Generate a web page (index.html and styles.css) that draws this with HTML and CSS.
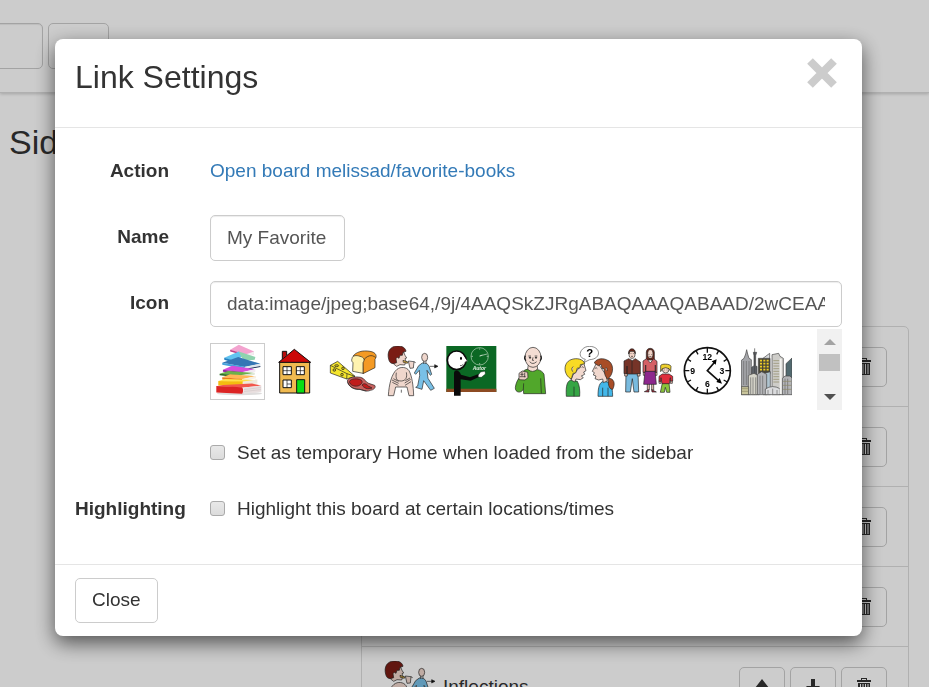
FILE: index.html
```html
<!DOCTYPE html>
<html lang="en">
<head>
    <meta charset="UTF-8">
    <meta name="viewport" content="width=device-width, initial-scale=1.0">
    <title>Link Settings</title>
    <link rel="stylesheet" href="styles.css">
</head>
<body>
    <!-- shared icons -->
    <svg class="symbols" aria-hidden="true">
        <symbol id="icon-up" viewBox="0 0 16 17">
            <path d="M8 1 L15 10 H10 V16 H6 V10 H1 Z"/>
        </symbol>
        <symbol id="icon-down" viewBox="0 0 16 17">
            <path d="M8 16 L1 8 H6 V1 H10 V8 H15 Z"/>
        </symbol>
        <symbol id="icon-trash" viewBox="0 0 16 17">
            <path d="M5 2 V0 H11 V2 H15 V4 H1 V2 Z M6 2 H10 V1 H6 Z" fill-rule="evenodd"/>
            <path d="M2 5 H14 V17 H2 Z M4 6 V16 H5 V6 Z M6.500 6 V16 H7.500 V6 Z M9 6 V16 H10 V6 Z M11.500 6 V16 H12.500 V6 Z" fill-rule="evenodd"/>
        </symbol>
        <symbol id="pic-inflections" viewBox="183 60 153 153">
            <g stroke="#222" stroke-width="2" stroke-linejoin="round">
                <path d="M207 96 L231 74 L237 88 L242 96 L237 98 L240 106 L236 117 L222 116 L212 121 L203 114 Z" fill="#efd6cc"/>
                <path d="M188 100 C182 78 192 61 213 60 C230 59 239 67 240 76 L231 79 L229 88 L222 88 L219 97 L214 94 L210 98 L212 110 L202 113 C194 113 190 108 188 100 Z" fill="#7a1c14"/>
                <path d="M231 103 L246 108 L244 112 L232 109 Z" fill="#e2b33c"/>
                <path d="M247 105 L264 107 L269 110 M247 105 L252 127 L262 126 L264 107" fill="#efd6cc"/>
                <path d="M213 130 C224 121 242 123 249 134 C258 150 262 180 263 209 H249 L243 183 L209 183 L203 209 H187 C189 175 197 143 213 130 Z" fill="#efd6cc"/>
                <path d="M211 140 C208 160 213 165 226 165 C240 164 244 154 241 139 M198 162 L218 172 M199 169 L217 178 M202 158 L218 166 M254 160 L236 171 M255 167 L237 178 M252 156 L238 164 M226 191 V200" fill="none"/>
                <path d="M289 111 C299 110 305 113 309 120 L317 145 L313 148 L303 133 L306 157 L325 187 L314 193 L293 164 L288 190 L269 184 L275 180 L281 149 L280 133 L269 145 L265 141 L278 119 Z" fill="#79c0e6"/>
                <ellipse cx="296" cy="94" rx="9" ry="12" fill="#efd6cc"/>
                <path d="M293 105 V113 M300 105 V113 M312 121 H328" fill="none"/>
                <path d="M326 116 L336 121 L326 126 Z" fill="#111"/>
            </g>
        </symbol>
    </svg>

    <!-- page behind the dialog -->
    <div class="page">
        <div class="topbar">
            <input type="text" class="search-box" aria-label="Search">
            <button type="button" class="search-btn" aria-label="Find"></button>
        </div>
        <h2 class="page-title">Sidebar</h2>
        <ul class="board-list">
            <li>
                <div class="actions">
                    <button type="button" aria-label="Move up"><svg><use href="#icon-up"/></svg></button>
                    <button type="button" aria-label="Move down"><svg><use href="#icon-down"/></svg></button>
                    <button type="button" aria-label="Delete"><svg><use href="#icon-trash"/></svg></button>
                </div>
            </li>
            <li>
                <div class="actions">
                    <button type="button" aria-label="Move up"><svg><use href="#icon-up"/></svg></button>
                    <button type="button" aria-label="Move down"><svg><use href="#icon-down"/></svg></button>
                    <button type="button" aria-label="Delete"><svg><use href="#icon-trash"/></svg></button>
                </div>
            </li>
            <li>
                <div class="actions">
                    <button type="button" aria-label="Move up"><svg><use href="#icon-up"/></svg></button>
                    <button type="button" aria-label="Move down"><svg><use href="#icon-down"/></svg></button>
                    <button type="button" aria-label="Delete"><svg><use href="#icon-trash"/></svg></button>
                </div>
            </li>
            <li>
                <div class="actions">
                    <button type="button" aria-label="Move up"><svg><use href="#icon-up"/></svg></button>
                    <button type="button" aria-label="Move down"><svg><use href="#icon-down"/></svg></button>
                    <button type="button" aria-label="Delete"><svg><use href="#icon-trash"/></svg></button>
                </div>
            </li>
            <li>
                <svg class="board-pic"><use href="#pic-inflections"/></svg>
                <span>Inflections</span>
                <div class="actions">
                    <button type="button" aria-label="Move up"><svg><use href="#icon-up"/></svg></button>
                    <button type="button" aria-label="Move down"><svg><use href="#icon-down"/></svg></button>
                    <button type="button" aria-label="Delete"><svg><use href="#icon-trash"/></svg></button>
                </div>
            </li>
        </ul>
    </div>

    <div class="overlay">
        <form class="modal" role="dialog" aria-labelledby="modal-title">
            <div class="modal-header">
                <h1 id="modal-title">Link Settings</h1>
                <button type="button" class="close-x" aria-label="Close">
                    <svg viewBox="0 0 31 31"><path d="M3 2 L27 26 M27 2 L3 26"/></svg>
                </button>
            </div>

            <div class="modal-body">
                <div class="form-row tall">
                    <span class="label">Action</span>
                    <div class="text-line"><a href="#">Open board melissad/favorite-books</a></div>
                </div>
                <div class="form-row tall">
                    <label class="label" for="name">Name</label>
                    <div><input type="text" id="name" class="text-box short" value="My Favorite"></div>
                </div>
                <div class="form-row tall">
                    <label class="label" for="icon">Icon</label>
                    <div>
                        <input type="text" id="icon" class="text-box" value="data:image/jpeg;base64,/9j/4AAQSkZJRgABAQAAAQABAAD/2wCEAAkGBxMTEhUT">
                        <div class="picker">
                            <div class="pictures">
                                <button type="button" class="picture selected" aria-label="Books">
                                    <svg viewBox="8 11 160 165">
                                        <ellipse cx="94" cy="160" rx="68" ry="5" fill="#dedcdc"/>
                                        <!-- pink -->
                                        <path d="M66 28 L92 13 L138 33 L136 44 L112 45 Z" fill="#f3a3cf"/>
                                        <path d="M66 28 L112 42 L112 46 L66 33 Z" fill="#c23f86"/>
                                        <path d="M112 42 L138 33 L137 43 L112 48 Z" fill="#f4eef1"/>
                                        <!-- light blue -->
                                        <path d="M48 52 L92 33 L106 48 L78 64 Z" fill="#62c3f0"/>
                                        <path d="M92 33 L142 50 L140 58 L104 62 Z" fill="#8fd3ae"/>
                                        <path d="M48 52 L78 61 L78 68 L48 58 Z" fill="#2383c4"/>
                                        <path d="M78 61 L100 50 L106 58 L80 69 Z" fill="#f5f6f7"/>
                                        <!-- blue -->
                                        <path d="M42 67 L90 50 L157 70 L110 80 Z" fill="#3576b5"/>
                                        <path d="M42 67 L110 79 V86 L42 73 Z" fill="#45a2dc"/>
                                        <path d="M110 79 L157 70 V77 L110 86 Z" fill="#dfe6ee"/>
                                        <path d="M110 86 L157 77 V80 L110 89 Z" fill="#23375f"/>
                                        <!-- purple -->
                                        <path d="M44 88 L72 76 L142 87 L104 96 Z" fill="#d64ddb"/>
                                        <path d="M44 88 L104 95 V102 L44 94 Z" fill="#9a1fa5"/>
                                        <path d="M104 95 L142 86 V94 L104 102 Z" fill="#f2eaf3"/>
                                        <!-- green -->
                                        <path d="M34 100 L60 92 L140 98 L96 106 Z" fill="#6bb04c"/>
                                        <path d="M34 100 L96 105 V112 L34 105 Z" fill="#2c6d25"/>
                                        <path d="M96 105 L140 97 V103 L96 112 Z" fill="#dfe9d8"/>
                                        <!-- orange -->
                                        <path d="M42 111 L66 102 L144 108 L102 117 Z" fill="#ffb657"/>
                                        <path d="M42 111 L102 116 V123 L42 118 Z" fill="#ea7d1a"/>
                                        <path d="M102 116 L144 107 V114 L102 123 Z" fill="#f7f0e4"/>
                                        <!-- yellow -->
                                        <path d="M30 122 L52 116 L148 119 L104 126 Z" fill="#ffe14a"/>
                                        <path d="M30 122 L104 124 V136 H30 Z" fill="#f4bd10"/>
                                        <path d="M104 124 L148 118 V130 L104 136 Z" fill="#efe9dc"/>
                                        <!-- red -->
                                        <path d="M24 138 L44 134 L132 130 L160 136 L106 142 Z" fill="#f2574b"/>
                                        <path d="M24 137 L102 141 Q108 150 102 161 L24 157 Z" fill="#dc2424"/>
                                        <path d="M106 142 L160 136 V155 L106 161 Z" fill="#e9dfdf"/>
                                        <path d="M107 148 L159 142 M107 154 L159 148" stroke="#bdb3b3" fill="none"/>
                                    </svg>
                                </button>
                                <button type="button" class="picture" aria-label="House">
                                    <svg viewBox="188 60 153 153">
                                        <g stroke="#111" stroke-width="3">
                                            <path d="M228 100 V76 H241 V88" fill="#b60c0c"/>
                                            <path d="M220 108 H310 V201 H220 Z" fill="#f0ba50"/>
                                            <path d="M217 109 L264 70 L313 109 Z" fill="#cc0808"/>
                                            <path d="M230 122 H255 V146 H230 Z M270 122 H294 V146 H270 Z M230 162 H255 V185 H230 Z" fill="#fff"/>
                                            <path d="M242 122 V146 M230 134 H255 M282 122 V146 M270 134 H294 M242 162 V185 M242 174 H255" stroke-width="2"/>
                                            <path d="M271 161 H295 V201 H271 Z" fill="#08df14"/>
                                        </g>
                                    </svg>
                                </button>
                                <button type="button" class="picture" aria-label="Food">
                                    <svg viewBox="8 60 153 153">
                                        <g stroke="#222" stroke-width="2" stroke-linejoin="round">
                                            <path d="M15 118 L37 106 L89 151 L64 159 L15 141 Z" fill="#f5e52d"/>
                                            <path d="M15 118 L65 143 L89 151 M65 143 L64 159" fill="none"/>
                                            <ellipse cx="34" cy="119" rx="6" ry="3" fill="#c8b51b"/>
                                            <circle cx="27" cy="132" r="4" fill="#c8b51b"/>
                                            <circle cx="50" cy="146" r="4" fill="#c8b51b"/>
                                            <circle cx="53" cy="127" r="4" fill="#c8b51b"/>
                                            <path d="M83 91 C91 78 112 72 134 76 C153 79 156 91 149 100 V125 L113 143 L112 106 C107 92 94 94 83 91 Z" fill="#f49a24"/>
                                            <path d="M112 106 C124 88 140 84 151 95" fill="none"/>
                                            <path d="M80 98 C81 88 93 87 104 91 C117 94 119 102 113 110 V142 L82 136 L83 110 C79 107 78 102 80 98 Z" fill="#fff3b0"/>
                                            <path d="M66 165 C69 153 88 151 106 154 C119 157 119 168 130 172 L148 178 C153 184 145 192 135 193 C122 199 112 191 101 190 C82 190 68 180 66 165 Z" fill="#c9625f"/>
                                            <path d="M72 167 C77 156 97 157 107 162 C116 168 106 177 98 180 C85 182 74 177 72 167 Z M110 177 C117 169 124 175 129 180 L140 186 C127 191 116 187 110 177 Z" fill="#c01c1c"/>
                                            <path d="M67 169 C74 187 93 191 103 190 L123 195" fill="none"/>
                                        </g>
                                    </svg>
                                </button>
                                <button type="button" class="picture" aria-label="Inflections">
                                    <svg><use href="#pic-inflections"/></svg>
                                </button>
                                <button type="button" class="picture" aria-label="School">
                                    <svg viewBox="362 60 153 153">
                                        <path d="M363 60 H513 V198 H363 Z" fill="#0b6824"/>
                                        <path d="M363 188 H513 V198 H363 Z" fill="#8d4b23"/>
                                        <circle cx="463" cy="91" r="26" fill="none" stroke="#b9d6bd" stroke-width="2"/>
                                        <path d="M463 90 L485 84 M463 90 L471 87 M463 67 V71 M463 111 V116 M438 91 H443 M484 91 H489" stroke="#d6e7d7" stroke-width="2"/>
                                        <text class="chalk" x="442" y="133">Autor</text>
                                        <path d="M386 209 V140 C388 130 402 132 407 146 L434 154 L462 143 L466 151 L436 164 L406 160 V209 Z" fill="#0a0a0a"/>
                                        <path d="M459 147 L466 138 L479 136 L480 144 L468 154 L459 153 Z" fill="#fff" stroke="#111"/>
                                        <circle cx="394" cy="103" r="28" fill="#fff" stroke="#0a0a0a" stroke-width="5"/>
                                        <path d="M415 91 L427 105 L416 111 Z" fill="#fff"/>
                                        <path d="M417 89 L426 105 L418 109" fill="none" stroke="#111" stroke-width="2"/>
                                        <ellipse cx="407" cy="97" rx="3" ry="5"/>
                                        <path d="M404 119 Q409 120 414 115" fill="none" stroke="#111" stroke-width="2"/>
                                    </svg>
                                </button>
                                <button type="button" class="picture" aria-label="Me">
                                    <svg viewBox="14 60 153 153">
                                        <g stroke="#222" stroke-width="2" stroke-linejoin="round">
                                            <path d="M80 130 C102 127 125 130 131 145 L136 203 H70 L69 190 C62 203 44 200 45 185 C46 171 54 156 62 150 C65 138 70 132 80 130 Z" fill="#51a72b"/>
                                            <path d="M121 157 L123 202 M70 172 L69 190" fill="none"/>
                                            <path d="M84 116 L82 130 Q97 143 112 129 L110 116" fill="#f4ddd3"/>
                                            <ellipse cx="98" cy="94" rx="24" ry="30" fill="#f4ddd3"/>
                                            <path d="M75 89 Q70 98 77 104 M121 89 Q126 98 119 104" fill="none" stroke-width="4"/>
                                            <path d="M88 107 Q97 118 109 107 M98 94 L96 103 H101 M84 90 H92 M103 90 H111" fill="none"/>
                                            <circle cx="89" cy="95" r="2"/>
                                            <circle cx="107" cy="95" r="2"/>
                                            <path d="M56 142 L66 135 L82 139 L83 155 L74 162 L56 161 Z" fill="#e7cdc2"/>
                                            <path d="M58 152 H76 M60 145 H70 M65 137 V150 M73 140 V154" fill="none"/>
                                        </g>
                                    </svg>
                                </button>
                                <button type="button" class="picture" aria-label="Questions">
                                    <svg viewBox="190 58 153 153">
                                        <g stroke="#222" stroke-width="2" stroke-linejoin="round">
                                            <path d="M249 108 L254 98 C225 91 241 59 266 59 C301 59 304 97 267 99 Z" fill="#fff" stroke="#555"/>
                                            <path d="M197 209 C195 178 199 162 212 160 L230 164 C237 176 238 192 237 209 Z" fill="#35a545"/>
                                            <path d="M220 209 V180" fill="none"/>
                                            <path d="M217 145 L249 108 L256 132 L249 136 L252 143 L242 148 L248 153 L239 159 L226 157 L222 166 L211 160 Z" fill="#f1d8ce"/>
                                            <path d="M212 157 C188 146 186 108 211 99 C228 92 249 98 252 111 L239 114 L238 124 L230 124 L225 139 L217 140 Z" fill="#f8db25"/>
                                            <path d="M218 120 Q210 124 216 135" fill="#f1d8ce"/>
                                            <path d="M243 122 Q247 118 249 123" fill="none"/>
                                            <path d="M292 209 C292 180 297 166 309 164 L326 167 C334 177 336 194 336 209 Z" fill="#43b7e9"/>
                                            <path d="M306 209 V183 M322 209 V183" fill="none"/>
                                            <path d="M316 145 L289 106 L275 134 L281 138 L278 145 L286 148 L283 156 L294 160 L306 157 L308 168 L320 163 Z" fill="#f1d8ce"/>
                                            <path d="M320 158 C341 144 342 107 317 99 C301 92 284 99 281 109 L293 117 L301 113 L304 125 L310 126 L313 145 Z M324 155 C340 155 345 171 336 188 C324 188 321 170 324 155 Z" fill="#a84d27"/>
                                            <path d="M314 125 Q320 119 319 133" fill="#f1d8ce"/>
                                            <path d="M282 126 Q287 120 290 126" fill="none"/>
                                        </g>
                                        <text class="question" x="267" y="91">?</text>
                                    </svg>
                                </button>
                                <button type="button" class="picture" aria-label="Family">
                                    <svg viewBox="372 60 153 153">
                                        <g stroke="#222" stroke-width="2" stroke-linejoin="round">
                                            <path d="M381 139 H417 L419 198 H405 L400 158 L394 198 H380 Z" fill="#79bbdf"/>
                                            <path d="M377 140 H385 V150 H377 Z M415 140 H423 V150 H415 Z" fill="#f0c8b8"/>
                                            <path d="M389 98 L375 105 V143 H384 V120 V144 H415 V143 H424 V108 L409 98 L400 104 Z" fill="#763428"/>
                                            <path d="M399 104 V143" fill="none"/>
                                            <ellipse cx="399" cy="84" rx="9" ry="13" fill="#f3d4c7"/>
                                            <path d="M389 84 C386 64 411 63 409 83 L405 76 H393 Z" fill="#6e281b"/>
                                            <path d="M442 79 C442 63 465 63 466 79 L466 102 H442 Z" fill="#6e281b"/>
                                            <path d="M445 171 H451 V192 H445 Z M458 171 H464 V192 H458 Z M433 139 H440 V148 H433 Z M468 139 H474 V148 H468 Z" fill="#f0c8b8"/>
                                            <path d="M443 98 L432 105 V139 H440 V117 V137 H469 V117 V139 H474 V106 L464 98 L454 111 Z" fill="#d45f65"/>
                                            <path d="M438 136 H468 L472 175 H434 Z" fill="#8d278d"/>
                                            <ellipse cx="454" cy="84" rx="8" ry="13" fill="#f3d4c7"/>
                                            <path d="M436 197 L449 191 L450 198 Z M458 191 L472 198 H459 Z" fill="#b22235"/>
                                            <path d="M490 171 H510 L513 199 H503 L499 184 L496 199 H484 Z" fill="#8ac33c"/>
                                            <path d="M480 164 H486 V172 H480 Z M514 164 H520 V172 H514 Z" fill="#f0c8b8"/>
                                            <path d="M490 144 H510 L521 151 V165 H514 V155 L511 173 H489 L486 155 V166 H480 V151 Z" fill="#df2d3c"/>
                                            <ellipse cx="500" cy="130" rx="10" ry="11" fill="#f3d4c7"/>
                                            <path d="M485 119 C486 112 514 113 516 121 L515 137 L510 128 L500 125 L490 128 L485 137 Z" fill="#eed02d"/>
                                            <path d="M396 82 V84 M403 82 V84 M450 84 V86 M458 84 V86 M396 91 H402 M451 92 H457 M496 131 V133 M504 131 V133"/>
                                        </g>
                                    </svg>
                                </button>
                                <button type="button" class="picture" aria-label="Clock">
                                    <svg viewBox="38 60 153 153">
                                        <circle cx="114" cy="134" r="69" fill="#fff" stroke="#111" stroke-width="5"/>
                                        <path d="M114 65 V80 M114 188 V203 M45 134 H60 M168 134 H183 M80 74 L86 85 M148 74 L142 85 M54 99 L65 106 M174 99 L163 106 M54 168 L65 162 M174 168 L163 162 M80 194 L86 183 M148 194 L142 183" stroke="#111" stroke-width="4"/>
                                        <path d="M137 107 L114 134 L150 166" fill="none" stroke="#111" stroke-width="5"/>
                                        <path d="M142 100 L139 116 L127 106 Z M158 173 L141 168 L151 156 Z"/>
                                        <g class="hours">
                                            <text x="114" y="103">12</text>
                                            <text x="158" y="143">3</text>
                                            <text x="114" y="183">6</text>
                                            <text x="70" y="143">9</text>
                                        </g>
                                    </svg>
                                </button>
                                <button type="button" class="picture" aria-label="City">
                                    <svg viewBox="215 60 153 153">
                                        <g stroke="#444" stroke-width="2">
                                            <path d="M216 103 L224 97 L229 84 L232 71 L235 84 L239 97 L246 101 V206 H216 Z" fill="#a5a6aa"/>
                                            <path d="M256 67 V206 M252 79 H262 L259 89 V121 H263 V206 H247 V124 L254 119 V89 Z" fill="#5d6268"/>
                                            <path d="M281 97 L301 82 V145 H281 Z" fill="#d8dadd"/>
                                            <path d="M267 97 H302 V143 H267 Z" fill="#4a4738"/>
                                            <path d="M350 113 L368 96 V170 H350 Z" fill="#526a70"/>
                                            <path d="M308 94 V86 L328 82 L332 91 L342 97 V206 H308 Z" fill="#cecdc9"/>
                                            <path d="M281 143 L303 137 V206 H281 Z" fill="#afc4cf"/>
                                            <path d="M237 148 L254 142 L270 150 V206 H237 Z" fill="#d5d4c9"/>
                                            <path d="M264 145 L277 137 L292 145 V206 H264 Z" fill="#b3b4b7"/>
                                            <path d="M339 157 L347 150 H362 L368 156 V206 H339 Z" fill="#b4b5b8"/>
                                            <path d="M216 182 H238 V206 H216 Z" fill="#c9c59c"/>
                                            <path d="M288 189 Q309 175 332 188 V206 H288 Z" fill="#dadbdd"/>
                                        </g>
                                        <path d="M272 104 H298 M272 113 H298 M272 122 H298 M272 131 H298" stroke="#f0cd25" stroke-width="5" stroke-dasharray="6 4"/>
                                        <path d="M223 105 V177 M231 105 V177 M239 105 V145 M244 154 V204 M251 154 V204 M259 154 V204 M272 149 V204 M280 149 V204 M347 158 V204 M355 158 V204 M296 192 V205 M310 188 V205 M323 192 V205" stroke="#666" stroke-width="2"/>
                                        <path d="M312 104 H330 M312 112 H330 M312 120 H330 M312 128 H330 M312 136 H330 M312 144 H330 M312 152 H330 M312 160 H330 M312 168 H330 M218 188 H236 M218 196 H236 M341 166 H366 M341 178 H366 M341 190 H366" stroke="#8c8662" stroke-width="2"/>
                                        <path d="M334 98 V204" stroke="#f3f3f0" stroke-width="6"/>
                                    </svg>
                                </button>
                            </div>
                            <div class="scrollbar" aria-hidden="true">
                                <span class="arrow-up"></span>
                                <span class="thumb"></span>
                                <span class="arrow-down"></span>
                            </div>
                        </div>
                    </div>
                </div>
                <div class="form-row">
                    <span class="label"></span>
                    <label class="check">
                        <input type="checkbox">
                        Set as temporary Home when loaded from the sidebar
                    </label>
                </div>
                <div class="form-row">
                    <span class="label">Highlighting</span>
                    <label class="check">
                        <input type="checkbox">
                        Highlight this board at certain locations/times
                    </label>
                </div>
            </div>

            <div class="modal-footer">
                <button type="button" class="btn">Close</button>
            </div>
        </form>
    </div>
</body>
</html>
```

FILE: styles.css
```css
/* General styles */
* {
    box-sizing: border-box;
    margin: 0;
    padding: 0;
}

body {
    height: 100vh;
    overflow: hidden;
    background: white;
    color: #333;
    font-family: "Liberation Sans", Arial, sans-serif;
    font-size: 19px;
    line-height: 27px;
}

button,
input {
    font: inherit;
    color: inherit;
}

button {
    background: none;
    border: none;
    cursor: pointer;
}

.symbols {
    position: absolute;
    width: 0;
    height: 0;
}

/* Page behind the dialog */
.page {
    height: 100vh;
    overflow: hidden;
}

.topbar {
    display: flex;
    gap: 5px;
    height: 93px;
    padding-top: 23px;
    border-bottom: 1px solid #ddd;
    box-shadow: 0 1px 3px rgba(0, 0, 0, 0.2);
}

.search-box,
.search-btn {
    height: 46px;
    width: 61px;
    border: 1px solid #ccc;
    border-radius: 5px;
}

.search-box {
    margin-left: -18px;
    box-shadow: inset 0 1px 1px rgba(0, 0, 0, 0.075);
}

.page-title {
    margin: 29px 9px 0;
    font-size: 34px;
    font-weight: normal;
    line-height: 40px;
}

.board-list {
    margin: 164px 20px 0 361px;
    border: 1px solid #ddd;
    border-radius: 5px;
    list-style: none;
}

.board-list li {
    display: flex;
    align-items: center;
    gap: 8px;
    height: 80px;
    padding: 0 21px 0 22px;
    border-bottom: 1px solid #ddd;
}

.board-pic {
    width: 51px;
    height: 51px;
}

.actions {
    display: flex;
    gap: 5px;
    margin-left: auto;
}

.actions button {
    display: flex;
    align-items: center;
    justify-content: center;
    width: 46px;
    height: 40px;
    border: 1px solid #ccc;
    border-radius: 5px;
}

.actions svg {
    width: 16px;
    height: 17px;
    fill: #333;
}

/* Dialog */
.overlay {
    position: fixed;
    top: 0;
    left: 0;
    width: 100%;
    height: 100%;
    padding: 39px 67px 0 55px;
    background: rgba(0, 0, 0, 0.2);
}

.modal {
    background: white;
    border-radius: 8px;
    box-shadow: 0 7px 20px rgba(0, 0, 0, 0.6);
}

.modal-header {
    display: flex;
    align-items: flex-start;
    justify-content: space-between;
    padding: 20px 24px 32px 20px;
    border-bottom: 1px solid #e5e5e5;
}

.modal-header h1 {
    font-size: 32px;
    font-weight: normal;
    line-height: 36px;
}

.close-x svg {
    display: block;
    width: 31px;
    height: 31px;
    overflow: visible;
    stroke: #ccc;
    stroke-width: 8;
}

.modal-body {
    display: grid;
    gap: 20px;
    padding: 21px 20px 42px;
}

.form-row {
    display: grid;
    grid-template-columns: 94px minmax(0, 1fr);
    column-gap: 41px;
    min-height: 36px;
}

.form-row.tall {
    min-height: 46px;
}

.label {
    padding-top: 9px;
    font-weight: bold;
    text-align: right;
}

.tall .label,
.text-line {
    padding-top: 8px;
}

a {
    color: #337ab7;
    text-decoration: none;
}

a:hover {
    text-decoration: underline;
}

.text-box {
    display: block;
    width: 100%;
    height: 46px;
    padding: 0 16px;
    border: 1px solid #ccc;
    border-radius: 5px;
    box-shadow: inset 0 1px 1px rgba(0, 0, 0, 0.075);
    color: #555;
}

.text-box.short {
    width: 135px;
}

/* Picture picker */
.picker {
    display: flex;
    justify-content: space-between;
    height: 81px;
    margin-top: 2px;
}

.pictures {
    display: flex;
    align-items: center;
    height: 81px;
    padding-top: 4px;
}

.picture {
    width: 51px;
    height: 51px;
    margin: 0 4px;
}

.picture svg {
    display: block;
    width: 100%;
    height: 100%;
}

.picture.selected {
    width: 55px;
    height: 57px;
    margin: 0;
    border: 1px solid #ccc;
}

.chalk {
    fill: #e4f0e4;
    font-size: 15px;
    font-style: italic;
    font-weight: bold;
}

.question {
    font-size: 34px;
    font-weight: bold;
    text-anchor: middle;
}

.hours {
    font-size: 26px;
    font-weight: bold;
    text-anchor: middle;
}

.scrollbar {
    display: flex;
    flex-direction: column;
    align-items: center;
    width: 25px;
    padding: 10px 2px;
    background: #f1f1f1;
}

.arrow-up,
.arrow-down {
    border: 6px solid transparent;
}

.arrow-up {
    border-top: none;
    border-bottom-color: #a3a3a3;
}

.arrow-down {
    margin-top: auto;
    border-bottom: none;
    border-top-color: #505050;
}

.thumb {
    width: 100%;
    height: 17px;
    margin-top: 9px;
    background: #c1c1c1;
}

/* Check boxes */
.check {
    display: flex;
    align-items: center;
    gap: 12px;
    padding-top: 9px;
}

.check input {
    appearance: none;
    width: 15px;
    height: 15px;
    border: 1px solid #aaa;
    border-radius: 3px;
    background: linear-gradient(#e8e8e8, #dcdcdc);
}

.check input:checked {
    background: #337ab7;
}

.modal-footer {
    display: flex;
    padding: 13px 20px;
    border-top: 1px solid #e5e5e5;
}

.btn {
    height: 45px;
    padding: 0 16px 2px;
    border: 1px solid #ccc;
    border-radius: 5px;
}

.btn:hover {
    background: #e6e6e6;
}
```
